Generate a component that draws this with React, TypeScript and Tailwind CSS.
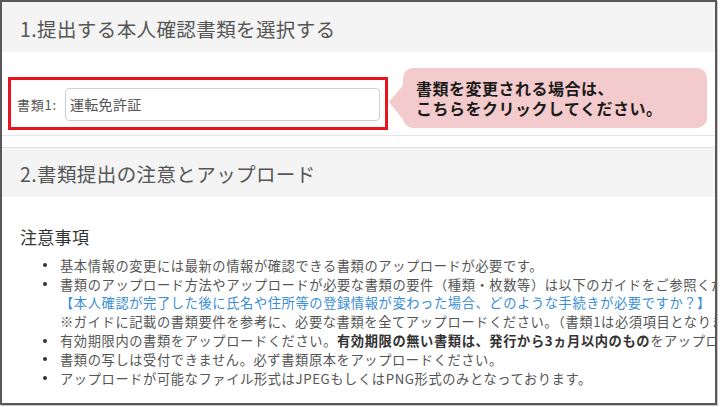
import React from 'react';

const font = { fontFamily: '"Noto Sans CJK JP", "Noto Sans", sans-serif' };

function Row({ dot, children }: { dot?: boolean; children: React.ReactNode }) {
  return (
    <div className="flex h-[18.8px] items-center whitespace-nowrap">
      <div className="flex w-[58px] shrink-0 justify-end pr-[13px]">
        {dot && <span className="h-[4px] w-[4px] rounded-full bg-[#333]" />}
      </div>
      <div className="text-[13.25px] leading-none tracking-[0.6px] text-[#555]">{children}</div>
    </div>
  );
}

export default function App() {
  return (
    <div className="h-[407px] w-[720px] overflow-hidden bg-white" style={font}>
      <div className="h-[405px] w-[717px] overflow-hidden border-2 border-[#585858] shadow-[1px_1px_0_#c8c8c8]">
        {/* section 1 */}
        <div className="flex h-[50px] items-center bg-[#f4f4f4] pl-[18px] pt-[3px] text-[19.5px] tracking-[0.4px] text-[#555]">
          1.提出する本人確認書類を選択する
        </div>
        <div className="flex h-[84px] items-start border-b border-[#e4e4e4] pl-[6px]">
          <div className="mt-[25px] flex h-[53px] w-[380px] items-center border-[3px] border-[#e8141e] pl-[6px] pr-[5px] pt-[2px]">
            <span className="w-[48px] shrink-0 whitespace-nowrap text-[13px] tracking-[0.8px] text-[#555]">書類1:</span>
            <div className="flex h-[33px] flex-1 items-center rounded-[4px] border border-[#cfcfcf] pl-[4px] text-[14px] tracking-[0.3px] text-[#555]">
              運転免許証
            </div>
          </div>
          <div className="relative ml-[15px] mt-[16px] flex h-[60px] w-[304px] flex-col justify-center rounded-[10px] bg-[#f4cbcc] pl-[13px] text-[16px] font-bold leading-[20px] tracking-[0.5px] text-[#1a1a1a]">
            <svg className="absolute left-[-14px] top-[15px]" width="16" height="40" viewBox="0 0 16 40">
              <polygon points="16,0 0,19 16,39" fill="#f4cbcc" />
            </svg>
            <div className="relative">書類を変更される場合は、</div>
            <div className="relative">こちらをクリックしてください。</div>
          </div>
        </div>

        {/* section 2 */}
        <div className="mt-[11px] flex h-[50px] items-center border-t border-[#e0e0e0] bg-[#f4f4f4] pl-[18px] pt-[2px] text-[19.5px] tracking-[0.4px] text-[#555]">
          2.書類提出の注意とアップロード
        </div>
        <div className="pl-[18px] pt-[28px] text-[17px] leading-[24px] tracking-[0.3px] text-[#333]">注意事項</div>
        <div className="mt-[7px]">
          <Row dot>基本情報の変更には最新の情報が確認できる書類のアップロードが必要です。</Row>
          <Row dot>
            書類のアップロード方法やアップロードが必要な書類の要件（種類・枚数等）は以下のガイドをご参照ください。
          </Row>
          <Row>
            <span className="text-[#3a8dd6]">
              【本人確認が完了した後に氏名や住所等の登録情報が変わった場合、どのような手続きが必要ですか？】
            </span>
          </Row>
          <Row>
            ※ガイドに記載の書類要件を参考に、必要な書類を全てアップロードください。（書類1は必須項目となります。）
          </Row>
          <Row dot>
            有効期限内の書類をアップロードください。
            <span className="font-bold text-[#333]">有効期限の無い書類は、発行から3ヵ月以内のもの</span>
            をアップロードください。
          </Row>
          <Row dot>書類の写しは受付できません。必ず書類原本をアップロードください。</Row>
          <Row dot>アップロードが可能なファイル形式はJPEGもしくはPNG形式のみとなっております。</Row>
        </div>
      </div>
    </div>
  );
}
